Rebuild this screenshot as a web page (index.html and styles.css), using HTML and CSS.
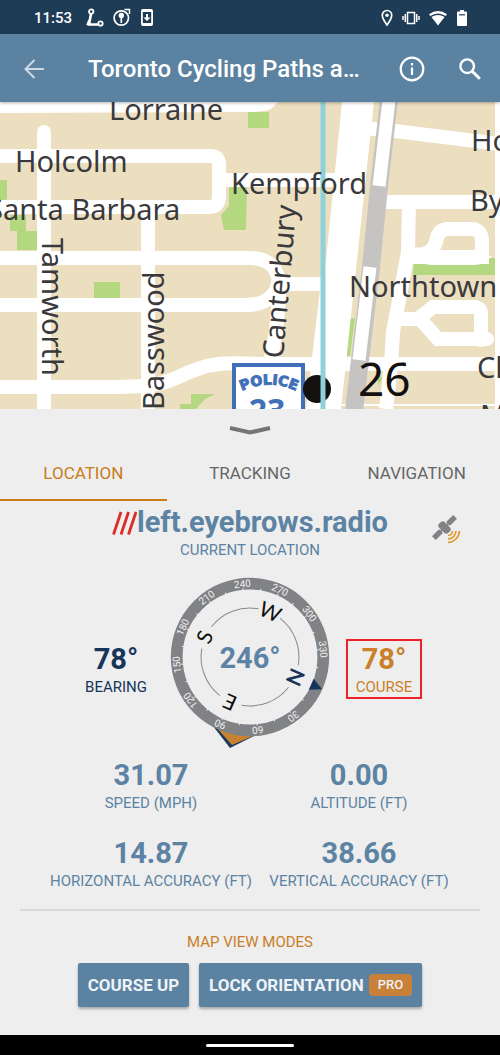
FILE: index.html
```html
<!DOCTYPE html>
<html lang="en">
<head>
    <meta charset="UTF-8">
    <meta name="viewport" content="width=device-width, initial-scale=1.0">
    <title>Toronto Cycling Paths</title>
    <link rel="stylesheet" href="styles.css">
</head>
<body>
    <div class="status-bar">
        <span class="clock">11:53</span>
        <svg class="status-icon" width="18" height="20" viewBox="0 0 18 20" fill="none" stroke="#fff">
            <path d="M5 6 L3 16.500 H12" stroke-width="2.600"/>
            <path d="M1 17 L3 12" stroke-width="1.600"/>
            <circle cx="5.200" cy="3.600" r="2.200" stroke-width="1.800"/>
            <circle cx="14.500" cy="15.500" r="2.200" stroke-width="1.800"/>
        </svg>
        <svg class="status-icon" width="18" height="20" viewBox="0 0 18 20" fill="none" stroke="#fff">
            <circle cx="8.300" cy="10" r="7.200" stroke-width="1.700"/>
            <circle cx="8.300" cy="7.500" r="2.700" fill="#fff" stroke="none"/>
            <path d="M8.300 8 V15" stroke-width="1.700"/>
            <path d="M11.500 1.500 H16.500 V6" stroke-width="1.500"/>
        </svg>
        <svg class="status-icon" width="14" height="20" viewBox="0 0 14 20">
            <path fill="#fff" fill-rule="evenodd" d="M3 1 H11 Q13 1 13 3 V16 Q13 18 11 18 H3 Q1 18 1 16 V3 Q1 1 3 1 Z M2.800 4 V15 H11.200 V4 Z M6 6 H8 V9.500 H10.500 L7 13 L3.500 9.500 H6 Z"/>
        </svg>
        <div class="status-right">
            <svg width="12" height="18" viewBox="0 0 12 18" fill="none" stroke="#fff" stroke-width="1.700">
                <path d="M6 16 C3.500 12.500 1.300 9 1.300 6.200 A4.700 4.700 0 0 1 10.700 6.200 C10.700 9 8.500 12.500 6 16 Z"/>
                <circle cx="6" cy="6.200" r="1.700" fill="#fff" stroke="none"/>
            </svg>
            <svg width="18" height="18" viewBox="0 0 18 18" fill="none" stroke="#fff" stroke-width="1.500">
                <rect x="5.500" y="3.500" width="7" height="11"/>
                <path d="M3.300 5 V13 M1 7 V11 M14.700 5 V13 M17 7 V11"/>
            </svg>
            <svg width="18" height="18" viewBox="0 0 18 18">
                <path fill="#fff" d="M0 5.300 Q9 -1.300 18 5.300 L16.600 7 Q9 1.800 1.400 7 Z M2.400 8 Q9 3.800 15.600 8 L9 16.500 Z"/>
            </svg>
            <svg width="12" height="18" viewBox="0 0 12 18">
                <path fill="#fff" d="M4 1 H8 V2.500 H10 Q11 2.500 11 3.500 V16 Q11 17 10 17 H2 Q1 17 1 16 V3.500 Q1 2.500 2 2.500 H4 Z"/>
                <path d="M3 5.800 H9" stroke="#1f3c56" stroke-width="1.200"/>
            </svg>
        </div>
    </div>

    <header class="app-bar">
        <button class="icon-button" type="button" aria-label="Back">
            <svg width="20" height="20" viewBox="0 0 20 20" fill="none" stroke="#cddae5" stroke-width="2">
                <path d="M20 10 H2 M10.500 1 L1.500 10 L10.500 19"/>
            </svg>
        </button>
        <h1>Toronto Cycling Paths a…</h1>
        <button class="icon-button info" type="button" aria-label="Information">
            <svg width="26" height="26" viewBox="0 0 26 26" fill="none" stroke="#fff" stroke-width="2.200">
                <circle cx="13" cy="13" r="11.300"/>
                <path d="M13 11.500 V19 M13 7 V9.400"/>
            </svg>
        </button>
        <button class="icon-button" type="button" aria-label="Search">
            <svg width="24" height="24" viewBox="0 0 24 24" fill="none" stroke="#fff" stroke-width="2.400">
                <circle cx="9.200" cy="9.200" r="6.800"/>
                <path d="M14.200 14.200 L21.800 21.800" stroke-width="3"/>
            </svg>
        </button>
    </header>

    <svg class="map" viewBox="0 0 500 307" role="img" aria-label="Map">
        <rect width="500" height="307" fill="#ecdfc0"/>

        <!-- parks -->
        <g fill="#b3d87f">
            <path d="M248 10 H269 V26 H248 Z M0 78 H7 V98 H0 Z M10 113 H26 V129 H37 V148 H17 V129 H10 Z"/>
            <path d="M229 85 H247 L246 128 H224 L221 113 L229 104 Z M94 180 H120 V200 H94 Z"/>
            <path d="M180 307 V302 H191 V292 H215 L205 297 L196 307 Z M349 217 L355 216 L350 254 H345 Z M378 268 L382 277 L378 284 Z"/>
            <path d="M414 156 H495 V173 H413 Z"/>
        </g>

        <!-- streets -->
        <g class="streets">
            <path d="M44 30 V307" stroke-linecap="round"/>
            <path d="M0 54 H211 Q219 54 219 63 V95 Q219 105 209 105 H0"/>
            <path d="M219 78 H340 M148 105 V307"/>
            <path d="M0 156 H250 Q281 156 279 190 Q277 240 267 270"/>
            <path d="M0 203 H245 Q279 203 279 172 M280 182 H330"/>
            <path d="M0 285 H110 C175 285 170 276 195 268 C220 258 235 262 270 262 H500"/>
            <path d="M365 26 L395 29 L500 42 M380 100 H500"/>
            <path d="M409 100 L408 150 L393 230 Q391 270 386 307"/>
            <path d="M409 151 Q430 157 436 140 Q438 127 448 127 H471 Q482 127 482 140 V155 H410"/>
            <path d="M398 217 H418 L433 205 H474 Q481 205 481 212 V238 M487 237 H438 L419 216" stroke-linecap="round"/>
        </g>
        <path fill="#fff" d="M0 0 H278 L271 7 Q264 10 250 10 L0 11 Z M342 0 H374 L357 158 L341 307 H306 L320 188 L326 158 Z M495 0 H500 V307 H495 Z"/>
        <path fill="#fff" d="M415 154 H492 Q484 163 474 163 H432 Q421 163 415 154 Z M342 302 H495 V304 H342 Z"/>

        <!-- railway -->
        <g fill="none">
            <path d="M389 -2 L379 85 L371 165 L354 309" stroke="#c6c4c3" stroke-width="18"/>
            <path d="M389 -2 L379 84 M370 165 L359 258" stroke="#fff" stroke-width="13"/>
        </g>

        <rect x="234" y="263" width="69" height="60" fill="#fff" stroke="#4170b8" stroke-width="4"/>
        <path id="policeArc" d="M236 292 Q269 273 302 292" fill="none"/>
        <text class="police"><textPath href="#policeArc" startOffset="50%" text-anchor="middle">POLICE</textPath></text>
        <text class="police-number" x="267" y="320" text-anchor="middle">23</text>

        <circle cx="317" cy="287" r="14" fill="#12110f"/>
        <path d="M323 0 V307" stroke="#8fd1d9" stroke-width="5"/>

        <g class="street-names">
            <text x="109" y="18">Lorraine</text>
            <text x="15" y="70">Holcolm</text>
            <text x="-13" y="118">Santa Barbara</text>
            <text x="231" y="92">Kempford</text>
            <text x="471" y="49">Hounslow</text>
            <text x="470" y="109">Byng</text>
            <text x="349" y="195">Northtown</text>
            <text x="477" y="276">Churchill</text>
            <text x="480" y="324">Mckee</text>
            <text transform="translate(42 136) rotate(90)">Tamworth</text>
            <text transform="translate(164 308) rotate(-90)">Basswood</text>
            <text transform="translate(283 257) rotate(-85)">Canterbury</text>
        </g>
        <text class="house-number" x="358" y="294">26</text>
    </svg>

    <main class="panel">
        <button class="handle" type="button" aria-label="Collapse panel">
            <svg width="42" height="10" viewBox="0 0 42 10" fill="none" stroke="#747474" stroke-width="4">
                <path d="M1 2 L21 6.500 L41 2"/>
            </svg>
        </button>

        <nav class="tabs">
            <a class="tab active" href="#location">LOCATION</a>
            <a class="tab" href="#tracking">TRACKING</a>
            <a class="tab" href="#navigation">NAVIGATION</a>
        </nav>

        <section class="address" id="location">
            <div class="words">
                <svg width="25" height="24" viewBox="0 0 25 24" fill="none" stroke="#dc2a26" stroke-width="2.800">
                    <path d="M1.500 23.500 L9 1 M9 23.500 L16.500 1 M16.500 23.500 L24 1"/>
                </svg><span>left.eyebrows.radio</span>
            </div>
            <div class="label">CURRENT LOCATION</div>
            <button class="satellite" type="button" aria-label="GPS status">
                <svg width="30" height="30" viewBox="0 0 30 30" fill="none">
                    <g transform="translate(12.500 12.500) rotate(-45)" fill="#808285">
                        <rect x="-15" y="-2.700" width="10" height="5.400"/>
                        <rect x="5" y="-2.700" width="10" height="5.400"/>
                        <rect x="-4" y="-6.500" width="8" height="13" rx="3"/>
                        <rect x="-6" y="-1" width="12" height="2"/>
                    </g>
                    <path d="M16 20.500 A5 5 0 0 0 20.500 16 M16 24 A8.500 8.500 0 0 0 24 16 M16 27.500 A12 12 0 0 0 27.500 16" stroke="#e09a2e" stroke-width="1.700"/>
                </svg>
            </button>
        </section>

        <section class="heading">
            <div class="reading bearing">
                <div class="value">78°</div>
                <div class="label">BEARING</div>
            </div>
            <svg class="compass" width="160" height="172" viewBox="-80 -80 160 172">
                <path d="M-37 69 L-20 91 L6 78 Z" fill="#1d3a5c"/>
                <path d="M-35 69 L-18 88 L3 79 Z" fill="#c98230"/>
                <circle r="73.300" fill="none" stroke="#808285" stroke-width="11.800"/>
                <g id="dial" transform="rotate(-246)">
                    <path class="north-mark" d="M-6 -67 L0 -79 L6 -67 Z"/>
                </g>
                <text class="heading-value" x="0" y="11" text-anchor="middle">246°</text>
            </svg>
            <div class="reading course">
                <div class="value">78°</div>
                <div class="label">COURSE</div>
            </div>
        </section>

        <section class="stats">
            <div class="stat">
                <div class="value">31.07</div>
                <div class="label">SPEED (MPH)</div>
            </div>
            <div class="stat">
                <div class="value">0.00</div>
                <div class="label">ALTITUDE (FT)</div>
            </div>
            <div class="stat">
                <div class="value">14.87</div>
                <div class="label">HORIZONTAL ACCURACY (FT)</div>
            </div>
            <div class="stat">
                <div class="value">38.66</div>
                <div class="label">VERTICAL ACCURACY (FT)</div>
            </div>
        </section>

        <section class="modes">
            <h2>MAP VIEW MODES</h2>
            <div class="mode-buttons">
                <button class="mode" type="button">COURSE UP</button>
                <button class="mode" type="button">LOCK ORIENTATION <span class="pro">PRO</span></button>
            </div>
        </section>
    </main>

    <div class="nav-bar"><span class="nav-pill"></span></div>

    <script src="compass.js"></script>
</body>
</html>
```

FILE: styles.css
```css
* {
    box-sizing: border-box;
}

body {
    margin: 0;
    min-height: 100vh;
    display: flex;
    flex-direction: column;
    font-family: Roboto, "Liberation Sans", sans-serif;
    background: #eeeeee;
    color: #5c83a3;
}

button {
    border: none;
    background: none;
    padding: 0;
    font-family: inherit;
    cursor: pointer;
}

svg {
    display: block;
}

.status-bar {
    display: flex;
    align-items: center;
    gap: 9px;
    height: 34px;
    padding: 2px 32px 0 34px;
    background: #1f3c56;
    color: #fff;
}

.clock {
    font-size: 15px;
    font-weight: 500;
    margin-right: 5px;
}

.status-right {
    display: flex;
    align-items: center;
    gap: 9px;
    margin-left: auto;
}

.app-bar {
    display: flex;
    align-items: center;
    height: 68px;
    padding: 2px 18px 0 24px;
    background: #5c82a1;
    box-shadow: 0 1px 3px rgba(0, 0, 0, 0.3);
    position: relative;
}

.app-bar h1 {
    flex: 1;
    margin: 0 0 0 44px;
    font-size: 24px;
    font-weight: 500;
    color: #fff;
    white-space: nowrap;
}

.icon-button.info {
    margin-right: 33px;
}

.map {
    width: 100%;
    height: auto;
}

.streets {
    fill: none;
    stroke: #fff;
    stroke-width: 14px;
}

.street-names {
    font-family: "Noto Sans", "Open Sans", sans-serif;
    font-size: 29px;
    fill: #3a393c;
}

.house-number {
    font-family: "Noto Sans", "Open Sans", sans-serif;
    font-size: 46px;
    fill: #12110f;
}

.police {
    font-family: "DejaVu Sans", sans-serif;
    font-size: 14px;
    font-weight: bold;
    fill: #4170b8;
    stroke: #4170b8;
    stroke-width: 1px;
}

.police-number {
    font-family: "Noto Sans", sans-serif;
    font-size: 32px;
    font-weight: bold;
    fill: #4170b8;
}

.panel {
    flex: 1;
}

.handle {
    display: block;
    margin: 0 auto;
    padding: 17px 0 9px;
}

.tabs {
    display: grid;
    grid-template-columns: repeat(3, 1fr);
}

.tab {
    height: 56px;
    line-height: 56px;
    border-bottom: 2px solid transparent;
    text-align: center;
    text-decoration: none;
    font-size: 17px;
    color: #666;
}

.tab.active {
    color: #c97c1a;
    border-color: #c97c1a;
}

.address {
    position: relative;
    padding-top: 4px;
    text-align: center;
}

.words {
    display: flex;
    justify-content: center;
    align-items: center;
    font-size: 29px;
    line-height: 35px;
    font-weight: bold;
}

.label {
    font-size: 15px;
    line-height: 20px;
}

.value {
    font-size: 29px;
    line-height: 36px;
    font-weight: bold;
}

.satellite {
    position: absolute;
    right: 38px;
    top: 14px;
}

.heading {
    display: grid;
    grid-template-columns: 1fr 160px 1fr;
    align-items: center;
    justify-items: center;
    padding: 17px 62px 0;
    text-align: center;
}

.reading {
    margin-top: 12px;
    padding: 0 8px;
    border: 2px solid transparent;
}

.bearing {
    color: #17345a;
}

.course {
    color: #c98029;
    border-color: #ee2029;
}

.heading-value {
    font-size: 29px;
    font-weight: bold;
    fill: #5c83a3;
}

.degree {
    font-size: 10px;
    fill: #f2f2f2;
}

.tick {
    stroke: #eeeeee;
    stroke-width: 1px;
}

.ring {
    fill: none;
    stroke: #8a8a8a;
    stroke-width: 1px;
}

.point {
    font-family: Lato, sans-serif;
    font-size: 21px;
    fill: #111;
}

.point.north {
    font-weight: bold;
    fill: #17345a;
}

.north-mark {
    fill: #17345a;
}

.stats {
    display: grid;
    grid-template-columns: 1fr 1fr;
    row-gap: 22px;
    margin: 8px 20px 0;
    padding: 0 17px 18px 27px;
    border-bottom: 2px solid #d8d8d8;
    text-align: center;
}

.modes {
    padding-bottom: 24px;
    text-align: center;
}

.modes h2 {
    margin: 21px 0 11px;
    font-size: 15px;
    line-height: 20px;
    font-weight: normal;
    color: #c98029;
}

.mode-buttons {
    display: flex;
    justify-content: center;
    gap: 10px;
}

.mode {
    display: flex;
    align-items: center;
    gap: 5px;
    height: 44px;
    padding: 0 10px;
    border-radius: 2px;
    background: #5c82a1;
    box-shadow: 0 2px 3px rgba(0, 0, 0, 0.3);
    color: #eef3f7;
    font-size: 17px;
    font-weight: bold;
}

.pro {
    padding: 0 9px;
    border-radius: 4px;
    background: #c9813a;
    font-size: 13px;
    line-height: 22px;
    font-weight: 500;
}

.nav-bar {
    display: flex;
    align-items: center;
    justify-content: center;
    height: 20px;
    background: #000;
}

.nav-pill {
    width: 88px;
    height: 3px;
    border-radius: 2px;
    background: #fff;
}
```

FILE: compass.js
```js
const SVG_NS = 'http://www.w3.org/2000/svg';
const dial = document.getElementById('dial');

function add(name, attrs, text) {
    const el = document.createElementNS(SVG_NS, name);
    for (const key in attrs) {
        el.setAttribute(key, attrs[key]);
    }
    if (text) {
        el.textContent = text;
    }
    dial.appendChild(el);
}

// ticks every 15 degrees, numbers every 30, north has its own mark
for (let deg = 15; deg < 360; deg += 15) {
    const rotate = `rotate(${deg})`;
    add('path', { class: 'tick', d: 'M0 -66 V-69', transform: rotate });
    if (deg % 30 === 0) {
        add('text', { class: 'degree', y: -70, 'text-anchor': 'middle', transform: rotate }, String(deg));
    }
}

// letters with a piece of the inner ring after each one
['N', 'E', 'S', 'W'].forEach(function (letter, i) {
    const rotate = `rotate(${i * 90})`;
    const cls = letter === 'N' ? 'point north' : 'point';
    add('text', { class: cls, y: -42, 'text-anchor': 'middle', transform: rotate }, letter);
    add('path', { class: 'ring', d: 'M11.9 -47.5 A49 49 0 0 1 47.5 -11.9', transform: rotate });
});
```
